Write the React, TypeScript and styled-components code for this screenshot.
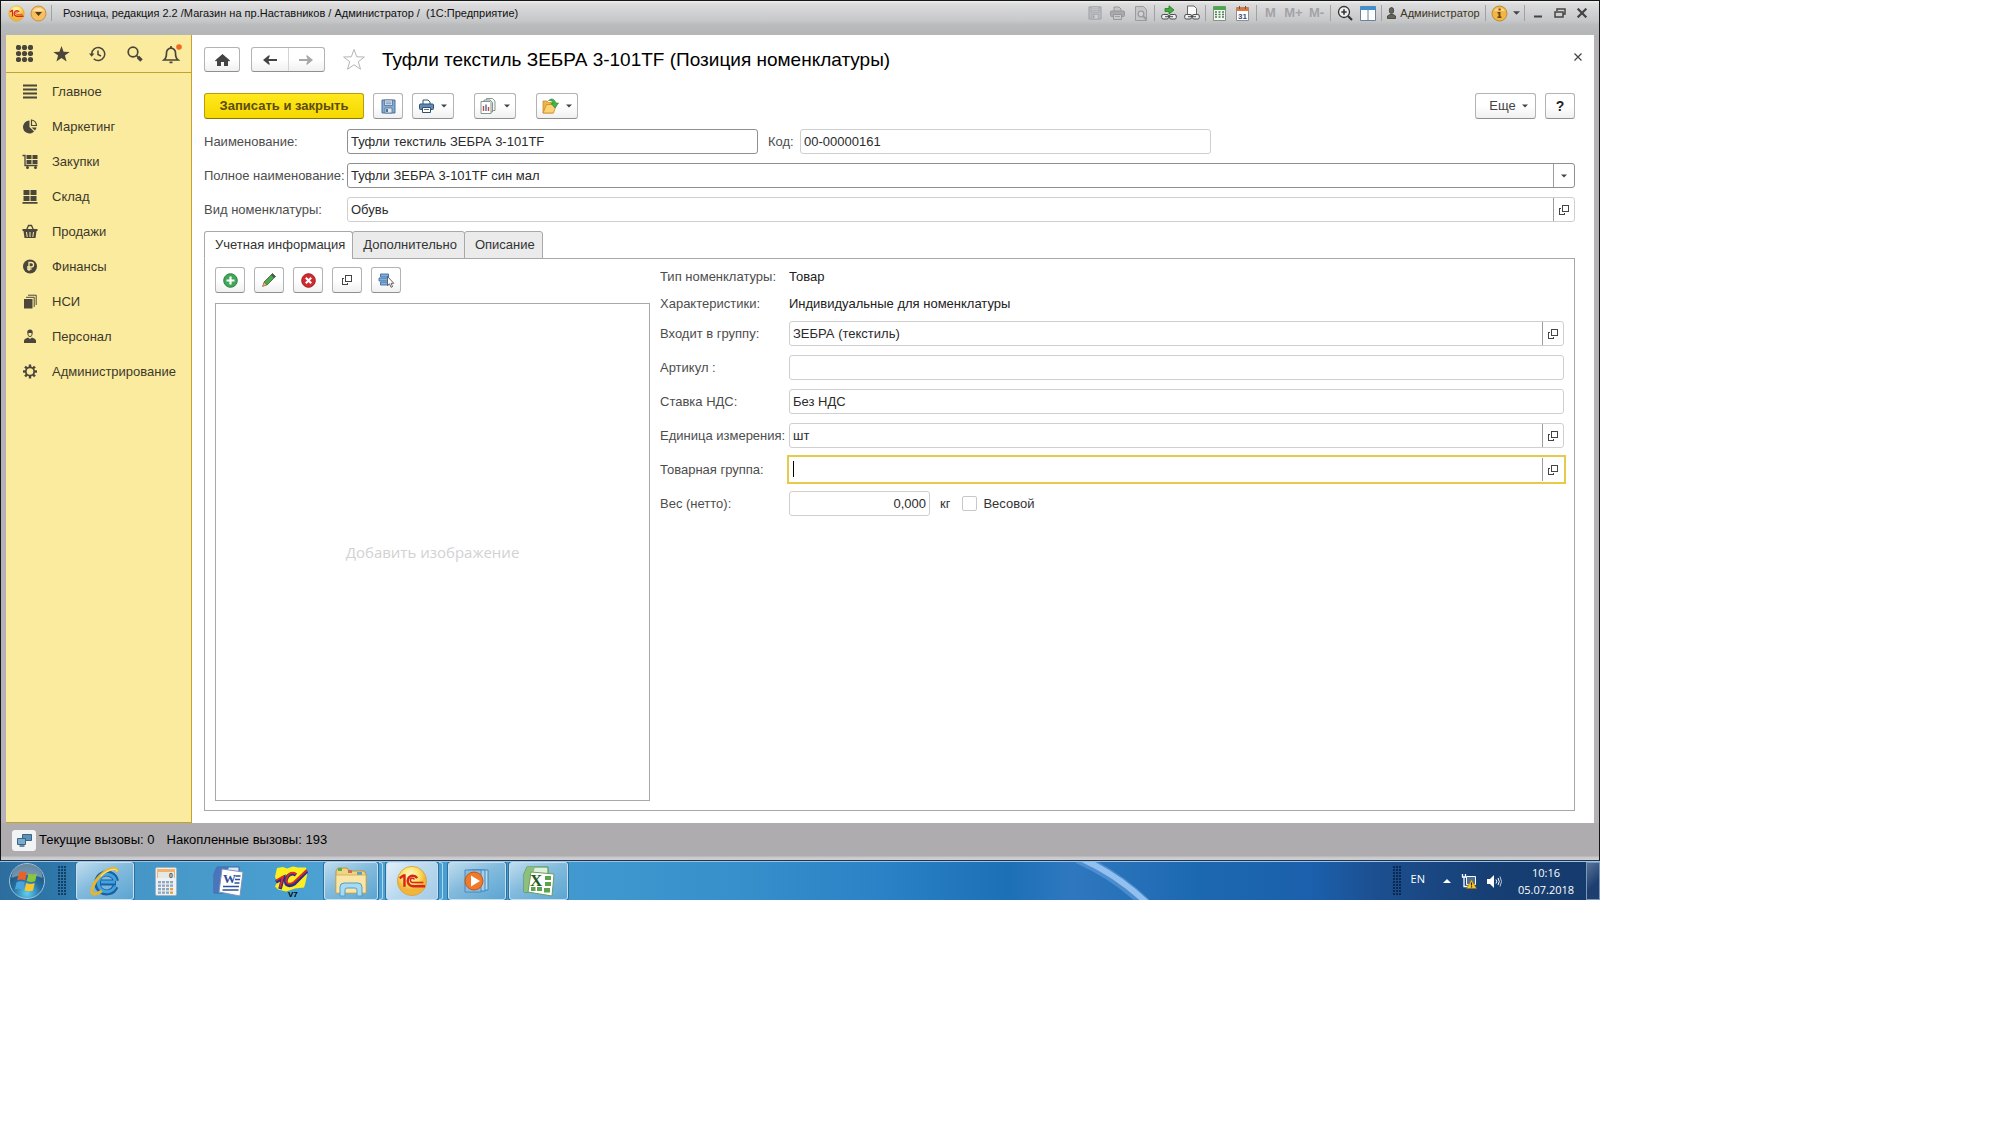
import React, { useState } from 'react';
import styled, { createGlobalStyle, css } from 'styled-components';

const GlobalStyle = createGlobalStyle`
  *, *::before, *::after { box-sizing: border-box; }
  body { margin: 0; background: #fff; font-family: "Liberation Sans", Arial, sans-serif; font-size: 13px; line-height: 16px; color: #333; }
  button, input { font: inherit; color: inherit; }
  svg { display: block; flex: none; }
`;

/* ---------- desktop and window frame ---------- */

const Desktop = styled.div`
  width: 100%;
  max-width: 1600px;
  display: flex;
  flex-direction: column;
`;

const Window = styled.div`
  display: flex;
  flex-direction: column;
  border: 1px solid #161616;
  border-bottom-color: #1f3450;
  background: #b4b2b6;
`;

const TitleBar = styled.header`
  height: 34px;
  padding: 0 6px 10px 4px;
  display: flex;
  align-items: center;
  background: linear-gradient(#f0f0f0 0, #dcdcdd 3px, #c6c7c9 20px, #babbbd 24px, #b4b5b6 100%);
`;

const WindowTitle = styled.span`
  margin-left: 9px;
  font-size: 11px;
  color: #111;
  white-space: pre;
  flex: 1;
`;

const Separator = styled.span`
  width: 1px;
  height: 16px;
  margin: 0 2px;
  background: #a2a2a4;
`;

const BareButton = styled.button`
  border: 0;
  padding: 0;
  background: none;
  display: flex;
  align-items: center;
  justify-content: center;
`;

const TitleButton = styled(BareButton)<{ $off?: boolean }>`
  width: 23px;
  height: 22px;
  font-weight: bold;
  color: ${p => (p.$off ? '#a3a3a5' : '#444')};
`;

const UserButton = styled(BareButton)`
  width: 99px;
  gap: 4px;
  font-size: 11px;
  color: #3a3420;
`;

const InfoButton = styled(BareButton)`
  width: 34px;
  gap: 5px;
`;

const MenuDot = styled(BareButton)`
  width: 22px;
`;

const Body = styled.div`
  display: flex;
  margin: 0 5px;
  background: #fff;
`;

/* ---------- sidebar ---------- */

const Sidebar = styled.nav`
  width: 186px;
  flex: none;
  background: #fbeb9e;
  border-right: 1px solid #c2a32f;
  border-bottom: 1px solid #c2a32f;
`;

const QuickBar = styled.div`
  height: 38px;
  padding-right: 1px;
  display: flex;
  border-bottom: 1px solid #c2a32f;
`;

const QuickButton = styled(BareButton)`
  flex: 1;
  color: #4a463c;
`;

const MenuList = styled.ul`
  list-style: none;
  margin: 0;
  padding: 1px 0 0;
`;

const MenuLink = styled.a`
  height: 35px;
  padding-left: 16px;
  display: flex;
  align-items: center;
  gap: 14px;
  color: #3d392d;
  text-decoration: none;
`;

/* ---------- form ---------- */

const Main = styled.main`
  flex: 1;
  min-width: 0;
  padding: 12px 19px 12px 12px;
  display: flex;
  flex-direction: column;
`;

const HeaderRow = styled.div`
  display: flex;
  align-items: center;
  height: 25px;
`;

const raised = css`
  border: 1px solid #b3b3b3;
  border-bottom-color: #8f8f8f;
  border-radius: 3px;
  background: linear-gradient(#fff 50%, #f0f0f0);
  color: #444;
`;

const ToolButton = styled.button<{ $w?: number }>`
  ${raised}
  width: ${p => p.$w ?? 30}px;
  height: 26px;
  padding: 0;
  display: flex;
  align-items: center;
  justify-content: center;
  gap: 7px;
`;

const HomeButton = styled(ToolButton)`
  height: 25px;
  margin-right: 11px;
`;

const NavGroup = styled.div`
  ${raised}
  width: 74px;
  height: 25px;
  display: flex;
  margin-right: 17px;
`;

const NavButton = styled(BareButton)`
  flex: 1;
  & + & { border-left: 1px solid #d4d4d4; }
`;

const PageTitle = styled.h1`
  margin: 0 0 0 16px;
  flex: 1;
  font-size: 19px;
  line-height: 24px;
  font-weight: normal;
  color: #000;
`;

const CloseButton = styled(BareButton)`
  width: 12px;
  height: 12px;
  margin: 0 -9px 6px 0;
`;

const Toolbar = styled.div`
  display: flex;
  gap: 9px;
  margin: 21px 0 10px;
`;

const PrimaryButton = styled.button`
  width: 160px;
  height: 26px;
  padding: 0;
  border: 1px solid #b89e0c;
  border-bottom-color: #8c7800;
  border-radius: 3px;
  background: linear-gradient(#ffe81e, #f6d800);
  font-weight: bold;
  font-size: 13px;
  color: #5a4d10;
`;

const Spaced = styled.div`
  margin-left: 11px;
`;

const RightTools = styled.div`
  display: flex;
  gap: 9px;
  margin-left: auto;
`;

const MoreButton = styled(ToolButton)`
  padding-left: 6px;
  gap: 6px;
`;

const HelpButton = styled(ToolButton)`
  font-weight: bold;
  font-size: 14px;
  color: #222;
`;

const Rows = styled.div`
  display: flex;
  flex-direction: column;
  gap: 9px;
`;

const Row = styled.div`
  display: flex;
  align-items: center;
  min-height: 25px;
`;

const TextRow = styled(Row)`
  min-height: 20px;
  margin-bottom: 7px;
  color: #222;
`;

const Label = styled.label<{ $w: number }>`
  width: ${p => p.$w}px;
  flex: none;
  white-space: nowrap;
  color: #4d4d4d;
`;

const InnerLabel = styled(Label)`
  margin-left: 10px;
`;

const FieldBox = styled.div<{ $strong?: boolean; $focus?: boolean; $basis?: number }>`
  height: 25px;
  flex: ${p => (p.$basis ? `0 1 ${p.$basis}px` : '1')};
  min-width: 0;
  display: flex;
  align-items: stretch;
  border: 1px solid ${p => (p.$focus ? '#fff' : p.$strong ? '#8f8f8f' : '#cfcfcf')};
  border-radius: 3px;
  background: #fff;
  ${p => p.$focus && css`
    border-radius: 0;
    box-shadow: 0 0 0 2px #e6cb4a;
  `}
`;

const TextInput = styled.input<{ $right?: boolean }>`
  flex: 1;
  min-width: 0;
  width: 100%;
  border: 0;
  outline: 0;
  padding: 0 3px;
  background: none;
  color: #2b2b2b;
  text-align: ${p => (p.$right ? 'right' : 'left')};
`;

const Caret = styled.span`
  width: 1px;
  height: 16px;
  margin: 3px 0 0 3px;
  background: #000;
`;

const FieldButton = styled(BareButton)`
  width: 21px;
  border-left: 1px solid #9c9c9c;
`;

const Unit = styled.span`
  margin: 0 12px 0 10px;
`;

const Check = styled.input`
  appearance: none;
  width: 15px;
  height: 15px;
  margin: 0 6px 0 0;
  border: 1px solid #c8c8c8;
  border-radius: 2px;
  background: #fff;
`;

const Tabs = styled.div`
  display: flex;
  margin-top: 9px;
  position: relative;
  z-index: 1;
`;

const Tab = styled.button<{ $active: boolean }>`
  height: 28px;
  padding: 0 7px 0 10px;
  margin-right: -1px;
  margin-bottom: -1px;
  border: 1px solid #a8a8a8;
  border-bottom-color: ${p => (p.$active ? '#fff' : '#a8a8a8')};
  border-radius: 3px 3px 0 0;
  background: ${p => (p.$active ? '#fff' : '#ebebeb')};
  color: #333;
`;

const Panel = styled.section`
  border: 1px solid #a8a8a8;
  padding: 8px 10px 9px;
  display: flex;
  gap: 10px;
`;

const PictureColumn = styled.div`
  flex: 0 1 435px;
`;

const PictureTools = styled.div`
  display: flex;
  gap: 9px;
  margin-bottom: 10px;
`;

const PictureBox = styled.div`
  min-height: 498px;
  display: flex;
  align-items: center;
  justify-content: center;
  border: 1px solid #a8a8a8;
  font-family: "Open Sans", "Noto Sans", sans-serif;
  font-size: 15px;
  color: #d2d2d2;
`;

const Details = styled.div`
  flex: 1;
  min-width: 0;
`;

/* ---------- status line and taskbar ---------- */

const StatusBar = styled.footer`
  height: 37px;
  padding: 0 6px 3px 11px;
  display: flex;
  align-items: center;
  background: linear-gradient(#aeacae 33px, #c6c6c8 34px, #d2d2d4 100%);
  color: #000;
`;

const StatusIcon = styled(BareButton)`
  width: 24px;
  height: 21px;
  margin-right: 3px;
  border-radius: 3px;
  background: #f2f3f5;
`;

const StatusText = styled.span`
  margin-right: 12px;
`;

const Taskbar = styled.div`
  position: relative;
  height: 39px;
  display: flex;
  align-items: stretch;
  overflow: hidden;
  border-top: 1px solid #9cc4e0;
  background: linear-gradient(90deg, #2d6d9e 0, #2f78ab 4%, #4596c6 8%, #4ba3d4 22%, #3f97cf 38%, #378fcb 46%, #2b82c6 55%, #1c70b6 63%, #2f78c0 67%, #1c68b0 75%, #1b60ac 82%, #1c4f90 86%, #173f74 93%, #153a6c 100%);
`;

const Streak = styled.svg`
  position: absolute;
  left: 66%;
  top: 0;
`;

const TaskButton = styled(BareButton)<{ $w: number; $open?: boolean; $bright?: boolean }>`
  width: ${p => p.$w}px;
  position: relative;
  ${p => p.$open && css`
    border: 1px solid #c4e0f2;
    border-radius: 3px;
    box-shadow: 0 0 0 1px #2f6f9c;
    background: ${p.$bright
      ? 'linear-gradient(135deg, #e3eff8, #b9d8ee 50%, #a5cbe8)'
      : 'linear-gradient(150deg, #bfdcee 0, #84bbdd 45%, #5ba5d2 100%)'};
  `}
`;

const StackEdge = styled.span`
  width: 4px;
  margin: 0 0 0 1px;
  border: 1px solid #b4d6ec;
  border-left: 0;
  border-radius: 0 3px 3px 0;
`;

const Grip = styled.span<{ $dark?: boolean }>`
  width: 9px;
  margin: 4px 0;
  background-image: radial-gradient(circle at 1px 1px, ${p => (p.$dark ? '#0b2850' : '#123f63')} 1px, transparent 1px);
  background-size: 3px 3px;
`;

const TaskGroup = styled.div<{ $ml: number }>`
  display: flex;
  margin-left: ${p => p.$ml}px;
`;

const Tray = styled.div`
  margin-left: auto;
  display: flex;
  align-items: center;
  color: #fff;
  font-family: "Open Sans", "Noto Sans", sans-serif;
  font-size: 11px;
  line-height: 17px;
  position: relative;
`;

const TrayGrip = styled(Grip)`
  align-self: stretch;
`;

const Lang = styled.span`
  margin: 0 18px 6px 9px;
`;

const TrayIcons = styled.div`
  display: flex;
  align-items: center;
  gap: 10px;
`;

const Clock = styled.div`
  width: 84px;
  padding-left: 4px;
  text-align: center;
`;

const ShowDesktop = styled.button`
  width: 14px;
  align-self: stretch;
  padding: 0;
  border: 1px solid #7d97b8;
  background: linear-gradient(135deg, #5a7398, #1d3f70 60%);
`;

/* ---------- icons ---------- */

const DARK = '#4a463c';

const Arrow = ({ color = '#444', size = 7 }: { color?: string; size?: number }) => (
  <svg width={size} height={4} viewBox="0 0 8 4"><path d="M0 0h8L4 4z" fill={color} /></svg>
);

const OpenIcon = () => (
  <svg width="10" height="10" viewBox="0 0 10 10" fill="none" stroke="#444" shapeRendering="crispEdges">
    <path d="M3.5.5h6v6h-6z" /><path d="M2 3.5H.5v6h5V8" />
  </svg>
);

const LogoOneC = ({ size = 17 }: { size?: number }) => (
  <svg width={size} height={size} viewBox="0 0 34 34">
    <defs>
      <radialGradient id="oneC" cx="45%" cy="30%"><stop offset="0" stopColor="#fffbd0" /><stop offset=".6" stopColor="#fbe36a" /><stop offset="1" stopColor="#f0b53a" /></radialGradient>
    </defs>
    <circle cx="17" cy="17" r="15.5" fill="url(#oneC)" stroke="#d9a441" />
    <g fill="none" stroke="#d8261c" strokeWidth="2.6">
      <path d="M4 14l4-3h1v12" />
      <path d="M22.5 14a5.5 5.5 0 1 0-4.500 8.500H31" />
      <path d="M19.500 15.500a2.200 2.200 0 1 0-2 3H29" strokeWidth="1.600" />
    </g>
  </svg>
);

const DropCircle = () => (
  <svg width="17" height="17" viewBox="0 0 17 17">
    <circle cx="8.500" cy="8.500" r="7.500" fill="#f8bf62" stroke="#c98f3e" />
    <path d="M3 6a6 5 0 0 1 11 0z" fill="#fde3b0" />
    <path d="M5 7h7l-3.500 4z" fill="#5a3a10" />
  </svg>
);

const FloppyIcon = ({ off }: { off?: boolean }) => {
  const edge = off ? '#a0a1a6' : '#4d7299';
  return (
    <svg width={off ? 14 : 15} height={off ? 14 : 15} viewBox="0 0 15 15">
      <path d="M1 1h13v13H1z" fill={off ? '#babbc0' : '#86aad0'} stroke={edge} />
      <path d="M3.500 1h8v5.500h-8z" fill={off ? '#cfd0d3' : '#e9f1f8'} stroke={edge} strokeWidth=".8" />
      <path d="M4.500 3h6M4.500 4.800h6" stroke={edge} strokeWidth=".8" />
      <path d="M4 9h7v5H4z" fill={off ? '#cfd0d3' : '#dfe9f2'} stroke={edge} strokeWidth=".8" />
      <path d="M5 10h2v3H5z" fill={edge} />
    </svg>
  );
};

const PrinterIcon = ({ off }: { off?: boolean }) => {
  const edge = off ? '#98989a' : '#33516e';
  return (
    <svg width="15" height="14" viewBox="0 0 15 14">
      <path d="M4 5V1h5l2 2v2" fill={off ? '#c6c6c8' : '#fff'} stroke={edge} />
      <rect x=".5" y="5" width="14" height="5.500" rx="1" fill={off ? '#a9a9ab' : '#5f8db9'} stroke={edge} />
      <path d="M3.500 8.500h8v5h-8z" fill={off ? '#c9c9cb' : '#fff'} stroke={edge} />
      <path d="M5 10.500h5" stroke={edge} strokeWidth=".8" />
    </svg>
  );
};

const PreviewIcon = () => (
  <svg width="14" height="15" viewBox="0 0 14 15" fill="none" stroke="#9c9c9e">
    <path d="M1.500.5h8l3 3v11h-11z" fill="#c6c6c8" />
    <circle cx="7" cy="8" r="2.800" fill="#d4d4d6" strokeWidth="1.300" /><path d="M9 10l3.500 3.500" strokeWidth="2" />
  </svg>
);

const ChainLink = ({ page }: { page?: boolean }) => (
  <svg width="16" height="16" viewBox="0 0 16 16">
    {page
      ? <path d="M3.500 9V1h6.500l2.500 2.500V9" fill="#fafafa" stroke="#666" />
      : <path d="M4 3.500h4V.8L13 5 8 9V6.500H4z" fill="#3fae3a" stroke="#1f7a1e" strokeWidth=".8" />}
    <rect x=".7" y="9.500" width="6.800" height="4.500" rx="1.500" fill="#eee" stroke="#4d4d4d" />
    <rect x="8.500" y="9.500" width="6.800" height="4.500" rx="1.500" fill="#eee" stroke="#4d4d4d" />
    <path d="M4 11.700h8" stroke="#4d4d4d" />
  </svg>
);

const CalcSmall = () => (
  <svg width="13" height="15" viewBox="0 0 13 15">
    <path d="M.5.5h12v14H.5z" fill="#f5f7f5" stroke="#8a8f8a" /><path d="M.5.500h12V4H.5z" fill="#4aa84a" />
    {[6, 8.500, 11].map(y => <path key={y} d={`M2 ${y}h2M5.500 ${y}h2M9 ${y}h2`} stroke="#46804a" strokeWidth="1.300" />)}
  </svg>
);

const CalendarIcon = () => (
  <svg width="13" height="15" viewBox="0 0 13 15">
    <path d="M.5 1.500h12v13H.5z" fill="#fff" stroke="#8f8f93" /><path d="M.5 1.500h12V5H.5z" fill="#d9793f" />
    <path d="M3.500 0v3M9.500 0v3" stroke="#8b4a22" />
    <text x="6.500" y="12.500" fontSize="8" fontWeight="bold" textAnchor="middle" fill="#3d4b7a">31</text>
  </svg>
);

const ZoomIcon = () => (
  <svg width="16" height="16" viewBox="0 0 16 16" fill="none" stroke="#333" strokeWidth="1.300">
    <circle cx="7" cy="7" r="5.500" fill="#eee" /><path d="M4.300 7h5.400M7 4.300v5.400" strokeWidth="1.600" /><path d="M11 11l4 4" strokeWidth="2.200" />
  </svg>
);

const PanesIcon = () => (
  <svg width="16" height="15" viewBox="0 0 16 15">
    <path d="M.5.5h15v14H.5z" fill="#fff" stroke="#6b8296" /><path d="M.5.5h15V4H.5z" fill="#3e8fd4" /><path d="M8 4v10.500" stroke="#6b8296" />
  </svg>
);

const PersonSmall = () => (
  <svg width="9" height="12" viewBox="0 0 9 12" fill="#66635c" stroke="#3c3a35" strokeWidth=".8">
    <ellipse cx="4.500" cy="3.500" rx="2.200" ry="3" /><path d="M.5 11.500V9l2.500-1.500h3L8.500 9v2.500z" />
  </svg>
);

const InfoIcon = () => (
  <svg width="17" height="17" viewBox="0 0 17 17">
    <circle cx="8.500" cy="8.500" r="7.500" fill="#f5b544" stroke="#bd8a30" /><path d="M3 6a6 5 0 0 1 11 0z" fill="#fbd78f" />
    <path d="M7.500 3.500h2.200v2H7.500zM6.500 7h3v4.500h1V13h-4v-1.500h1v-3h-1z" fill="#6b4a12" />
  </svg>
);

const quickIcons: Record<string, React.ReactNode> = {
  'Все функции': (
    <svg width="17" height="17" viewBox="0 0 17 17" fill={DARK}>
      {[2.500, 8.500, 14.500].flatMap(y => [2.500, 8.500, 14.500].map(x => <circle key={`${x}${y}`} cx={x} cy={y} r="2.600" />))}
    </svg>
  ),
  'Избранное': <svg width="17" height="16" viewBox="0 0 17 16"><path d="M8.500 0l2.100 5.700 6.100.2-4.800 3.700 1.700 5.900-5.100-3.400-5.100 3.400 1.700-5.900L.3 5.900l6.100-.2z" fill={DARK} /></svg>,
  'История': (
    <svg width="17" height="16" viewBox="0 0 17 16" fill="none" stroke={DARK} strokeWidth="1.500">
      <path d="M2.700 8a6.500 6.500 0 1 1 2 4.700" /><path d="M0 7.500h5.400L2.700 10.800z" fill={DARK} stroke="none" /><path d="M9 4.500v4l3 1.500" />
    </svg>
  ),
  'Поиск': (
    <svg width="16" height="16" viewBox="0 0 16 16" fill="none" stroke={DARK}>
      <circle cx="6" cy="6" r="4.800" strokeWidth="1.700" /><path d="M9.500 9.500l2 2" strokeWidth="1.700" /><path d="M11 11l3.500 3.500" strokeWidth="3.400" />
    </svg>
  ),
  'Оповещения': (
    <svg width="20" height="20" viewBox="0 0 20 20" fill="none" stroke={DARK} strokeWidth="1.700">
      <path d="M2 16c2.500-2 2.500-4 2.500-7A4.500 4.500 0 0 1 9 4.200 4.500 4.500 0 0 1 13.500 9c0 3 0 5 2.500 7z" /><path d="M7.500 18.300h3M9 2v2" />
      <circle cx="17" cy="3" r="2.800" fill="#f0691f" stroke="none" />
    </svg>
  ),
};

const menu: { name: string; icon: React.ReactNode }[] = [
  { name: 'Главное', icon: <path d="M.5 1.500h14M.5 5.500h14M.5 9.500h14M.5 13.500h14" stroke={DARK} strokeWidth="2" /> },
  { name: 'Маркетинг', icon: <><path d="M7 1.500A6.500 6.500 0 1 0 11.600 12.600L7 8z" fill={DARK} /><path d="M9 1v5.500h5A6 6 0 0 0 9 1z" fill="none" stroke={DARK} strokeWidth="1.200" /><path d="M9 8.500h5a6 6 0 0 1-1.500 3z" fill={DARK} /></> },
  { name: 'Закупки', icon: <><path d="M0 1.500h2.500v10H15" fill="none" stroke={DARK} strokeWidth="1.300" /><path d="M4 1h5v4H4zM10 1h5v4h-5zM4 6h5v4H4zM10 6h5v4h-5z" fill={DARK} /><circle cx="5" cy="13.500" r="1.500" fill={DARK} /><circle cx="13" cy="13.500" r="1.500" fill={DARK} /></> },
  { name: 'Склад', icon: <path d="M1 1h6v5H1zM8 1h6v5H8zM1 7h6v5H1zM8 7h6v5H8zM0 13h15v1.800H0z" fill={DARK} /> },
  { name: 'Продажи', icon: <><path d="M4 6l2-4.500h3L11 6" fill="none" stroke={DARK} strokeWidth="1.300" /><path d="M0 5h15v2h-1l-1 7H2L1 7H0z" fill={DARK} /><path d="M4 8l.7 5M7.500 8v5M11 8l-.7 5" stroke="#fbeb9e" strokeWidth="1" /></> },
  { name: 'Финансы', icon: <><circle cx="7.500" cy="7.500" r="7" fill={DARK} /><path d="M6.500 12V3.500h2.300a2.200 2.200 0 0 1 0 4.500H4.500M4.500 10H9" fill="none" stroke="#fbeb9e" strokeWidth="1.300" /></> },
  { name: 'НСИ', icon: <><path d="M1.500 5h8.500v9.500H1.500z" fill={DARK} /><path d="M3.500 3.300h8.200V13M5.500 1.200h8.200V11" fill="none" stroke={DARK} strokeWidth="1" /></> },
  { name: 'Персонал', icon: <><path d="M7.500.5c2 0 3 1.500 2.700 3.500C10 6.500 9 8 7.500 8S5 6.500 4.800 4C4.500 2 5.500.5 7.500.5z" fill={DARK} /><path d="M6 4h3v2.200L7.500 7.200 6 6.200z" fill="#fbeb9e" /><path d="M1.500 14v-2.500C2 9.500 4.500 9 5.500 8.500L7.500 10l2-1.500c1 .5 3.500 1 4 3V14z" fill={DARK} /></> },
  { name: 'Администрирование', icon: <><circle cx="7.500" cy="7.500" r="4.200" fill="none" stroke={DARK} strokeWidth="1.800" />{[0, 45, 90, 135, 180, 225, 270, 315].map(a => <path key={a} d="M6.300.500h2.400v2.700H6.300z" fill={DARK} transform={`rotate(${a} 7.500 7.500)`} />)}</> },
];

const HomeIcon = () => <svg width="15" height="12" viewBox="0 0 15 12"><path d="M7.500 0L15 6.500l-1 1L13 6.700V12H9V8H6v4H2V6.700l-1 .8-1-1z" fill="#444" /></svg>;
const BackIcon = ({ color, flip }: { color: string; flip?: boolean }) => (
  <svg width="14" height="10" viewBox="0 0 14 10"><path d="M14 4v2H5.500L7 9.500H5.500L0 5 5.500.5H7L5.500 4z" fill={color} transform={flip ? 'rotate(180 7 5)' : undefined} /></svg>
);
const StarOutline = () => <svg width="24" height="23" viewBox="0 0 24 23"><path d="M12 1.500l2.700 7.300 7.700.2-6.100 4.700 2.200 7.500-6.500-4.400-6.500 4.400 2.200-7.500L1.600 9l7.700-.2z" fill="#fff" stroke="#b5b5b5" /></svg>;
const CrossIcon = ({ w = 1.200, size = 8 }: { w?: number; size?: number }) => <svg width={size} height={size} viewBox="0 0 8 8"><path d="M.5.5l7 7M7.500.5l-7 7" stroke="#444" strokeWidth={w} /></svg>;

const ReportIcon = () => (
  <svg width="17" height="16" viewBox="0 0 17 16" stroke="#7a8a86" strokeWidth=".9">
    <path d="M6.500.5h6l2.500 2.500v9.500H6.500z" fill="#f4f7f5" /><path d="M4 2h6l2.500 2.500v9.500H4z" fill="#f4f7f5" /><path d="M1 3.500h9l1 1v11H1z" fill="#fff" />
    <path d="M3.500 13V8" stroke="#c4473a" strokeWidth="1.400" /><path d="M6 13V6.500" stroke="#4d6ea0" strokeWidth="1.400" /><path d="M8.500 13V9" stroke="#c4473a" strokeWidth="1.400" />
  </svg>
);
const FolderGo = () => (
  <svg width="17" height="16" viewBox="0 0 17 16">
    <path d="M1 3h4l1.500 1.500H11V15H1z" fill="#f0b548" stroke="#c88a2a" strokeWidth=".8" /><path d="M1 15l3.500-8.500h10L11.500 15z" fill="#fcd274" stroke="#c88a2a" strokeWidth=".8" />
    <path d="M6.500 2.500C9 0 12.500.3 13.800 5H16.500L13 10 9 5.500h2.300C10.800 3.200 8.800 2.300 6.500 2.500z" fill="#43b34a" stroke="#278a30" strokeWidth=".6" />
  </svg>
);
const AddIcon = () => <svg width="15" height="15" viewBox="0 0 15 15"><circle cx="7.500" cy="7.500" r="6.800" fill="#3fa856" stroke="#2a8040" /><path d="M3.500 7.500h8M7.500 3.500v8" stroke="#fff" strokeWidth="2.200" /></svg>;
const PencilIcon = () => <svg width="14" height="14" viewBox="0 0 14 14"><path d="M10.500.5l3 3-8.500 8.500L2 9z" fill="#4ca64c" stroke="#33663a" strokeWidth=".8" /><path d="M2 9l3 3-4.500 1.500z" fill="#e8b878" stroke="#6b5230" strokeWidth=".6" /><path d="M10.500.500l3 3-1.500 1.500-3-3z" fill="#4b5a4b" /></svg>;
const DeleteIcon = () => <svg width="15" height="15" viewBox="0 0 15 15"><circle cx="7.500" cy="7.500" r="6.800" fill="#cf2b2e" stroke="#a01c22" /><path d="M4.800 4.800l5.400 5.400M10.200 4.800l-5.400 5.400" stroke="#fff" strokeWidth="2.100" /></svg>;
const PickIcon = () => (
  <svg width="17" height="15" viewBox="0 0 17 15">
    <path d="M2.500 1h8v3h-8zM1 5h10v3H1zM2.500 9h8v3h-8z" fill="#7fb0df" stroke="#3a6ea5" strokeWidth=".9" />
    <path d="M9.500 3.500v9l2-1.700 1.500 3.500 1.600-.7-1.500-3.300h2.700z" fill="#fff" stroke="#555" strokeWidth=".9" />
  </svg>
);
const NetPcIcon = () => (
  <svg width="15" height="13" viewBox="0 0 15 13">
    <path d="M5.500.5h9v6h-9z" fill="#5a93ba" stroke="#3f6580" /><path d="M.5 4.500h8v6h-8z" fill="#76add0" stroke="#3f6580" /><path d="M2.500 12h5" stroke="#3f6580" strokeWidth="1.500" />
  </svg>
);

const StartOrb = () => (
  <svg width="38" height="38" viewBox="0 0 38 38">
    <defs><radialGradient id="orb" cx="50%" cy="85%" r="80%"><stop offset="0" stopColor="#5fd0f2" /><stop offset=".5" stopColor="#256e9f" /><stop offset="1" stopColor="#1c4a70" /></radialGradient></defs>
    <circle cx="19" cy="19" r="17.500" fill="url(#orb)" stroke="#9fc4dc" /><path d="M3.500 16a15.500 14 0 0 1 31 0c-9-4-22-4-31 0z" fill="#fff" opacity=".35" />
    <path d="M11 10.500c3-1.500 5.500-1 8 .2l-1.800 7.800c-2.500-1.200-5-1.500-8-.2z" fill="#e8622c" /><path d="M20.500 11.500c3 1.200 5 1.500 8.500 0l-1.800 7.800c-3 1.200-5.500 1-8.500-.2z" fill="#8cc63e" />
    <path d="M8.700 20c3-1.300 5.500-1 8 .2l-1.800 7.500c-2.500-1.200-5-1.500-8-.2z" fill="#4aa5dc" /><path d="M18.200 21c3 1.200 5.500 1.300 8.500 0L25 28.500c-3 1.200-5.500 1-8.500-.2z" fill="#fbc72e" />
  </svg>
);
const IeIcon = () => (
  <svg width="32" height="32" viewBox="0 0 32 32" fill="none">
    <path d="M27 17.500H11M26.500 21.500A9.500 9.500 0 1 1 27 16" stroke="#1b5fa3" strokeWidth="6" /><path d="M26 17H12M26 21.500A8.700 8.700 0 1 1 26.500 16" stroke="#3fa3dd" strokeWidth="3" />
    <path d="M28 7C29 1 19 3 11 11 4 18 0 29 5 29c2 0 5-1 8-3" stroke="#e6b52c" strokeWidth="3" /><path d="M28 6.500C28 2.500 19 4 11.500 11.500" stroke="#fae07a" strokeWidth="1.200" />
  </svg>
);
const CalculatorIcon = () => (
  <svg width="22" height="29" viewBox="0 0 22 29">
    <rect x=".5" y=".5" width="21" height="28" rx="1.500" fill="#eef1f4" stroke="#9db4c6" /><path d="M2 2h18v9H2z" fill="#f5b26e" /><path d="M3 5h16v6H3z" fill="#e5e9e4" />
    <text x="16" y="10.500" fontSize="7" fontWeight="bold" textAnchor="middle" fill="#444">0</text>
    {[14, 17.500, 21, 24.500].flatMap(y => [3, 7, 11, 15].map(x => <rect key={`${x}-${y}`} x={x} y={y} width="3" height="2.300" fill={x === 15 && y > 20 ? '#e4a23c' : '#8fa6bb'} />))}
  </svg>
);
const WordIcon = () => (
  <svg width="31" height="31" viewBox="0 0 31 31">
    <path d="M4 1h22v26H1V8z" fill="#dce8f6" stroke="#3b62a8" /><path d="M4 1h12L6 27H1V8z" fill="#4a74bb" /><path d="M9 3l21 3-3 24L6 26z" fill="#fff" stroke="#7d93b8" />
    <text x="10" y="17" fontSize="13" fontWeight="bold" fill="#2c519c" fontFamily="Liberation Serif">W</text>
    <path d="M22.500 10h5M22 13.500h5M21.500 17h5M10 20.500h16M9.500 24h16" stroke="#2c519c" strokeWidth="1.700" />
  </svg>
);
const OneCSeven = () => (
  <svg width="34" height="33" viewBox="0 0 34 33">
    <path d="M3 3l6-1 4 1.500 6-2 5 1 8 0 1 8-2 9-1 3-9 1-9 3-8-2-3-3 2-4-2-6z" fill="#fbf01e" />
    <path d="M2 17l7-4-3 11M22 10c-4-3-9 0-10 5s3 7 8 4L33 6" fill="none" stroke="#2a2f8c" strokeWidth="3.600" /><path d="M2 15.500l7-4-3 11M22 9c-4-3-8.500 0-9.500 5s3 6 7.500 3L33 5" fill="none" stroke="#e02a24" strokeWidth="1.800" />
    <text x="14" y="32" fontSize="8" fontWeight="bold" fill="#000">V7</text>
  </svg>
);
const ExplorerIcon = () => (
  <svg width="34" height="31" viewBox="0 0 34 31">
    <path d="M2 5l2-3h9l2 3h15l2 3v19H2z" fill="#f0d480" stroke="#b8953e" /><path d="M4 2h4v3H4z" fill="#57ad57" /><path d="M14 4h4v3h-4z" fill="#d4694d" /><path d="M23 6h5v3h-5z" fill="#5a9fd0" /><path d="M2 9h30v18H2z" fill="#f9e6a6" stroke="#caa95a" strokeWidth=".8" />
    <path d="M6 30v-9q0-4 4-4h14q4 0 4 4v9h-5v-6q0-2-2-2h-8q-2 0-2 2v6z" fill="#a9daf3" stroke="#4f9fc8" />
  </svg>
);
const PlayerIcon = () => (
  <svg width="26" height="26" viewBox="0 0 26 26">
    <path d="M8 2h16v20H8z" fill="#bcdcf2" stroke="#3f86b8" /><path d="M5 2h16v21H5z" fill="#a6cdeb" stroke="#3f86b8" /><path d="M1 2h16v22H1z" fill="#8dbbe0" stroke="#4a88b6" />
    <circle cx="10" cy="13" r="9" fill="#ef7a2a" stroke="#c45714" /><path d="M7 7.500l9 5.500-9 5.500z" fill="#fff" />
  </svg>
);
const ExcelIcon = () => (
  <svg width="32" height="31" viewBox="0 0 32 31">
    <path d="M4 1h21v25H1V8z" fill="#dff0da" stroke="#4a8a3f" /><path d="M4 1h8L5 26H1V8z" fill="#8cc07c" /><path d="M8 6l23 2-2 22-24-4z" fill="#fff" stroke="#6a9e5e" />
    <path d="M22 10h6v4h-6zM22 16h6v4h-6zM21 22h6v4.500h-6zM14 21h5v4h-5zM8 21h4.500v4H8z" fill="#5da24c" />
    <text x="7" y="20" fontSize="17" fontWeight="bold" fill="#1f5c22" fontFamily="Liberation Serif">X</text>
  </svg>
);
const NetTray = () => (
  <svg width="16" height="15" viewBox="0 0 16 15" fill="none" stroke="#fff"><path d="M5.500 2.500h9v8h-9z" fill="#4b6f99" /><path d="M1.500 0v3h3V0M3 3v9.500h4" strokeWidth="1.300" /><path d="M10.500 5.500l5 9h-10z" fill="#f5c828" stroke="#8a6a10" strokeWidth=".6" /><path d="M10.500 8.500v3M10.500 12.300v1.200" stroke="#222" strokeWidth="1.200" /></svg>
);
const Speaker = () => (
  <svg width="15" height="13" viewBox="0 0 15 13" fill="none" stroke="#fff"><path d="M0 4h3l4-4v13L3 9H0z" fill="#fff" stroke="none" /><path d="M9 4.500q1.500 2 0 4M11 3q2.500 3.500 0 7" /><path d="M13 1.500q3 5 0 10" opacity=".7" /></svg>
);

/* ---------- composed parts ---------- */

type FieldProps = { id: string; value: string; strong?: boolean; focus?: boolean; basis?: number; right?: boolean; addon?: 'open' | 'list' };

const Field = ({ id, value, strong, focus, basis, right, addon }: FieldProps) => {
  const [text, setText] = useState(value);
  return (
    <FieldBox $strong={strong} $focus={focus} $basis={basis}>
      {focus && <Caret />}
      <TextInput id={id} value={text} $right={right} onChange={e => setText(e.target.value)} />
      {addon && <FieldButton type="button" aria-label={addon === 'open' ? 'Открыть' : 'Выбрать'}>{addon === 'open' ? <OpenIcon /> : <Arrow size={6} />}</FieldButton>}
    </FieldBox>
  );
};

const details: (FieldProps & { label: string })[] = [
  { id: 'group', label: 'Входит в группу:', value: 'ЗЕБРА (текстиль)', addon: 'open' },
  { id: 'article', label: 'Артикул :', value: '' },
  { id: 'vat', label: 'Ставка НДС:', value: 'Без НДС' },
  { id: 'unit', label: 'Единица измерения:', value: 'шт', addon: 'open' },
  { id: 'goods', label: 'Товарная группа:', value: '', addon: 'open', focus: true },
];

const tabNames = ['Учетная информация', 'Дополнительно', 'Описание'];

export default function App() {
  const [tab, setTab] = useState(0);
  return (
    <Desktop>
      <GlobalStyle />
      <Window>
        <TitleBar>
          <MenuDot aria-label="1С"><LogoOneC /></MenuDot>
          <MenuDot aria-label="Меню"><DropCircle /></MenuDot>
          <Separator />
          <WindowTitle>Розница, редакция 2.2 /Магазин на пр.Наставников / Администратор /  (1С:Предприятие)</WindowTitle>
          <TitleButton aria-label="Сохранить"><FloppyIcon off /></TitleButton>
          <TitleButton aria-label="Печать"><PrinterIcon off /></TitleButton>
          <TitleButton aria-label="Просмотр"><PreviewIcon /></TitleButton>
          <Separator />
          <TitleButton aria-label="Перейти по ссылке"><ChainLink /></TitleButton>
          <TitleButton aria-label="Получить ссылку"><ChainLink page /></TitleButton>
          <Separator />
          <TitleButton aria-label="Калькулятор"><CalcSmall /></TitleButton>
          <TitleButton aria-label="Календарь"><CalendarIcon /></TitleButton>
          <Separator />
          <TitleButton $off>M</TitleButton>
          <TitleButton $off>M+</TitleButton>
          <TitleButton $off>M-</TitleButton>
          <Separator />
          <TitleButton aria-label="Масштаб"><ZoomIcon /></TitleButton>
          <TitleButton aria-label="Панели"><PanesIcon /></TitleButton>
          <Separator />
          <UserButton><PersonSmall />Администратор</UserButton>
          <Separator />
          <InfoButton aria-label="Справка"><InfoIcon /><Arrow /></InfoButton>
          <Separator />
          <MenuDot aria-label="Свернуть"><svg width="8" height="10"><path d="M0 8.500h8" stroke="#444" strokeWidth="2" /></svg></MenuDot>
          <MenuDot aria-label="Восстановить"><svg width="12" height="10" fill="none" stroke="#444"><path d="M3 3V1h8v5H9" strokeWidth="1.500" /><path d="M1 4h8v5H1z" strokeWidth="1.500" /></svg></MenuDot>
          <MenuDot aria-label="Закрыть"><CrossIcon w={1.800} size={10} /></MenuDot>
        </TitleBar>

        <Body>
          <Sidebar>
            <QuickBar>
              {Object.entries(quickIcons).map(([name, icon]) => <QuickButton key={name} aria-label={name}>{icon}</QuickButton>)}
            </QuickBar>
            <MenuList>
              {menu.map(m => (
                <li key={m.name}><MenuLink href="#"><svg width="16" height="15" viewBox="0 0 15 15">{m.icon}</svg>{m.name}</MenuLink></li>
              ))}
            </MenuList>
          </Sidebar>

          <Main>
            <HeaderRow>
              <HomeButton $w={36} aria-label="Домой"><HomeIcon /></HomeButton>
              <NavGroup>
                <NavButton aria-label="Назад"><BackIcon color="#444" /></NavButton>
                <NavButton aria-label="Вперед"><BackIcon color="#a8a8a8" flip /></NavButton>
              </NavGroup>
              <BareButton aria-label="В избранное"><StarOutline /></BareButton>
              <PageTitle>Туфли текстиль ЗЕБРА 3-101TF (Позиция номенклатуры)</PageTitle>
              <CloseButton aria-label="Закрыть форму"><CrossIcon /></CloseButton>
            </HeaderRow>

            <Toolbar>
              <PrimaryButton>Записать и закрыть</PrimaryButton>
              <ToolButton aria-label="Записать"><FloppyIcon /></ToolButton>
              <ToolButton $w={42} aria-label="Печать"><PrinterIcon /><Arrow size={6} /></ToolButton>
              <Spaced><ToolButton $w={42} aria-label="Отчеты"><ReportIcon /><Arrow size={6} /></ToolButton></Spaced>
              <Spaced><ToolButton $w={42} aria-label="Перейти"><FolderGo /><Arrow size={6} /></ToolButton></Spaced>
              <RightTools>
                <MoreButton $w={61}>Еще<Arrow size={6} /></MoreButton>
                <HelpButton>?</HelpButton>
              </RightTools>
            </Toolbar>

            <Rows>
              <Row>
                <Label $w={143} htmlFor="name">Наименование:</Label>
                <Field id="name" value="Туфли текстиль ЗЕБРА 3-101TF" strong basis={411} />
                <InnerLabel $w={32} htmlFor="code">Код:</InnerLabel>
                <Field id="code" value="00-00000161" basis={411} />
              </Row>
              <Row>
                <Label $w={143} htmlFor="full">Полное наименование:</Label>
                <Field id="full" value="Туфли ЗЕБРА 3-101TF син мал" strong addon="list" />
              </Row>
              <Row>
                <Label $w={143} htmlFor="kind">Вид номенклатуры:</Label>
                <Field id="kind" value="Обувь" addon="open" />
              </Row>
            </Rows>

            <Tabs role="tablist">
              {tabNames.map((name, i) => <Tab key={name} role="tab" aria-selected={tab === i} $active={tab === i} onClick={() => setTab(i)}>{name}</Tab>)}
            </Tabs>
            <Panel>
              <PictureColumn>
                <PictureTools>
                  <ToolButton aria-label="Добавить"><AddIcon /></ToolButton>
                  <ToolButton aria-label="Изменить"><PencilIcon /></ToolButton>
                  <ToolButton aria-label="Удалить"><DeleteIcon /></ToolButton>
                  <ToolButton aria-label="Открыть"><OpenIcon /></ToolButton>
                  <ToolButton aria-label="Выбрать из списка"><PickIcon /></ToolButton>
                </PictureTools>
                <PictureBox>Добавить изображение</PictureBox>
              </PictureColumn>
              <Details>
                <TextRow><Label as="span" $w={129}>Тип номенклатуры:</Label>Товар</TextRow>
                <TextRow><Label as="span" $w={129}>Характеристики:</Label>Индивидуальные для номенклатуры</TextRow>
                <Rows>
                  {details.map(({ label, ...field }) => (
                    <Row key={field.id}><Label $w={129} htmlFor={field.id}>{label}</Label><Field {...field} /></Row>
                  ))}
                  <Row>
                    <Label $w={129} htmlFor="weight">Вес (нетто):</Label>
                    <Field id="weight" value="0,000" basis={141} right />
                    <Unit>кг</Unit>
                    <Check type="checkbox" id="weighed" />
                    <label htmlFor="weighed">Весовой</label>
                  </Row>
                </Rows>
              </Details>
            </Panel>
          </Main>
        </Body>

        <StatusBar>
          <StatusIcon aria-label="Соединение"><NetPcIcon /></StatusIcon>
          <StatusText>Текущие вызовы: 0</StatusText>
          <StatusText>Накопленные вызовы: 193</StatusText>
        </StatusBar>
      </Window>

      <Taskbar>
        <Streak width="120" height="39" viewBox="0 0 120 39" fill="none" aria-hidden="true">
          <path d="M22 -4Q62 14 92 44" stroke="#7fb4ea" strokeWidth="11" opacity=".4" /><path d="M24 -4Q64 14 94 44" stroke="#a4cdf8" strokeWidth="6" opacity=".8" />
        </Streak>
        <TaskGroup $ml={8}><BareButton aria-label="Пуск"><StartOrb /></BareButton></TaskGroup>
        <TaskGroup $ml={12}><Grip /></TaskGroup>
        <TaskGroup $ml={9}>
          <TaskButton $w={58} $open aria-label="Internet Explorer"><IeIcon /></TaskButton>
          <TaskButton $w={64} aria-label="Калькулятор"><CalculatorIcon /></TaskButton>
          <TaskButton $w={60} aria-label="Word"><WordIcon /></TaskButton>
          <TaskButton $w={66} aria-label="1С 7"><OneCSeven /></TaskButton>
          <TaskButton $w={54} $open aria-label="Проводник"><ExplorerIcon /></TaskButton>
          <StackEdge />
        </TaskGroup>
        <TaskGroup $ml={3}>
          <TaskButton $w={52} $open $bright aria-label="1С:Предприятие"><LogoOneC size={32} /></TaskButton>
          <StackEdge />
        </TaskGroup>
        <TaskGroup $ml={5}><TaskButton $w={58} $open aria-label="Проигрыватель"><PlayerIcon /></TaskButton></TaskGroup>
        <TaskGroup $ml={3}><TaskButton $w={59} $open aria-label="Excel"><ExcelIcon /></TaskButton></TaskGroup>
        <Tray>
          <TrayGrip $dark />
          <Lang>EN</Lang>
          <TrayIcons>
            <svg width="8" height="4"><path d="M0 4h8L4 0z" fill="#fff" /></svg>
            <NetTray />
            <Speaker />
          </TrayIcons>
          <Clock>10:16<br />05.07.2018</Clock>
          <ShowDesktop aria-label="Показать рабочий стол" />
        </Tray>
      </Taskbar>
    </Desktop>
  );
}
